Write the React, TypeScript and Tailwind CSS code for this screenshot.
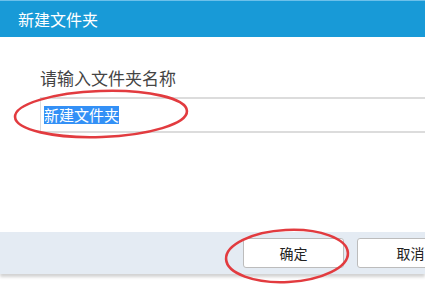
export default function App() {
  const font = { fontFamily: '"Microsoft YaHei", "Noto Sans CJK SC", "Noto Sans", sans-serif' };
  return (
    <div className="relative h-[285px] w-[425px] overflow-hidden bg-white" style={font}>
      {/* title bar */}
      <div className="flex h-[37px] items-center border-t border-[#6cc0ea] bg-[#189ad7] pl-[18px]">
        <span className="text-[16px] leading-none text-white">新建文件夹</span>
      </div>

      {/* body */}
      <div className="pl-[40px] pt-[30px]">
        <div className="text-[17px] leading-[22px] text-[#444]">请输入文件夹名称</div>
        <div className="mt-[8px] flex h-[36px] items-center border-y-2 border-l border-[#dcdcdc] pl-[3px]">
          <span className="bg-[#3390f6] text-[15px] leading-[18px] text-white">新建文件夹</span>
        </div>
      </div>

      {/* footer */}
      <div className="absolute left-0 right-0 top-[232px] flex h-[42px] items-center gap-[13px] bg-[#e4ebf3] pl-[243px] shadow-[0_3px_3px_rgba(0,0,0,0.18)]">
        <button className="flex h-[30px] w-[101px] shrink-0 items-center justify-center rounded-[3px] border border-[#bcbcbc] bg-white text-[14px] text-[#222]">
          确定
        </button>
        <button className="flex h-[30px] w-[101px] shrink-0 items-center justify-center rounded-[3px] border border-[#bcbcbc] bg-white pl-[6px] text-[14px] text-[#222]">
          取消
        </button>
      </div>

      {/* red annotation ellipses */}
      <svg className="pointer-events-none absolute left-0 top-0" width="425" height="285">
        <ellipse cx="101" cy="114" rx="86" ry="23" fill="none" stroke="#e23b3f" strokeWidth="2.6" transform="rotate(-2 101 114)" />
        <ellipse cx="287" cy="256" rx="61" ry="26" fill="none" stroke="#e23b3f" strokeWidth="2.6" transform="rotate(-3 287 256)" />
      </svg>
    </div>
  );
}
